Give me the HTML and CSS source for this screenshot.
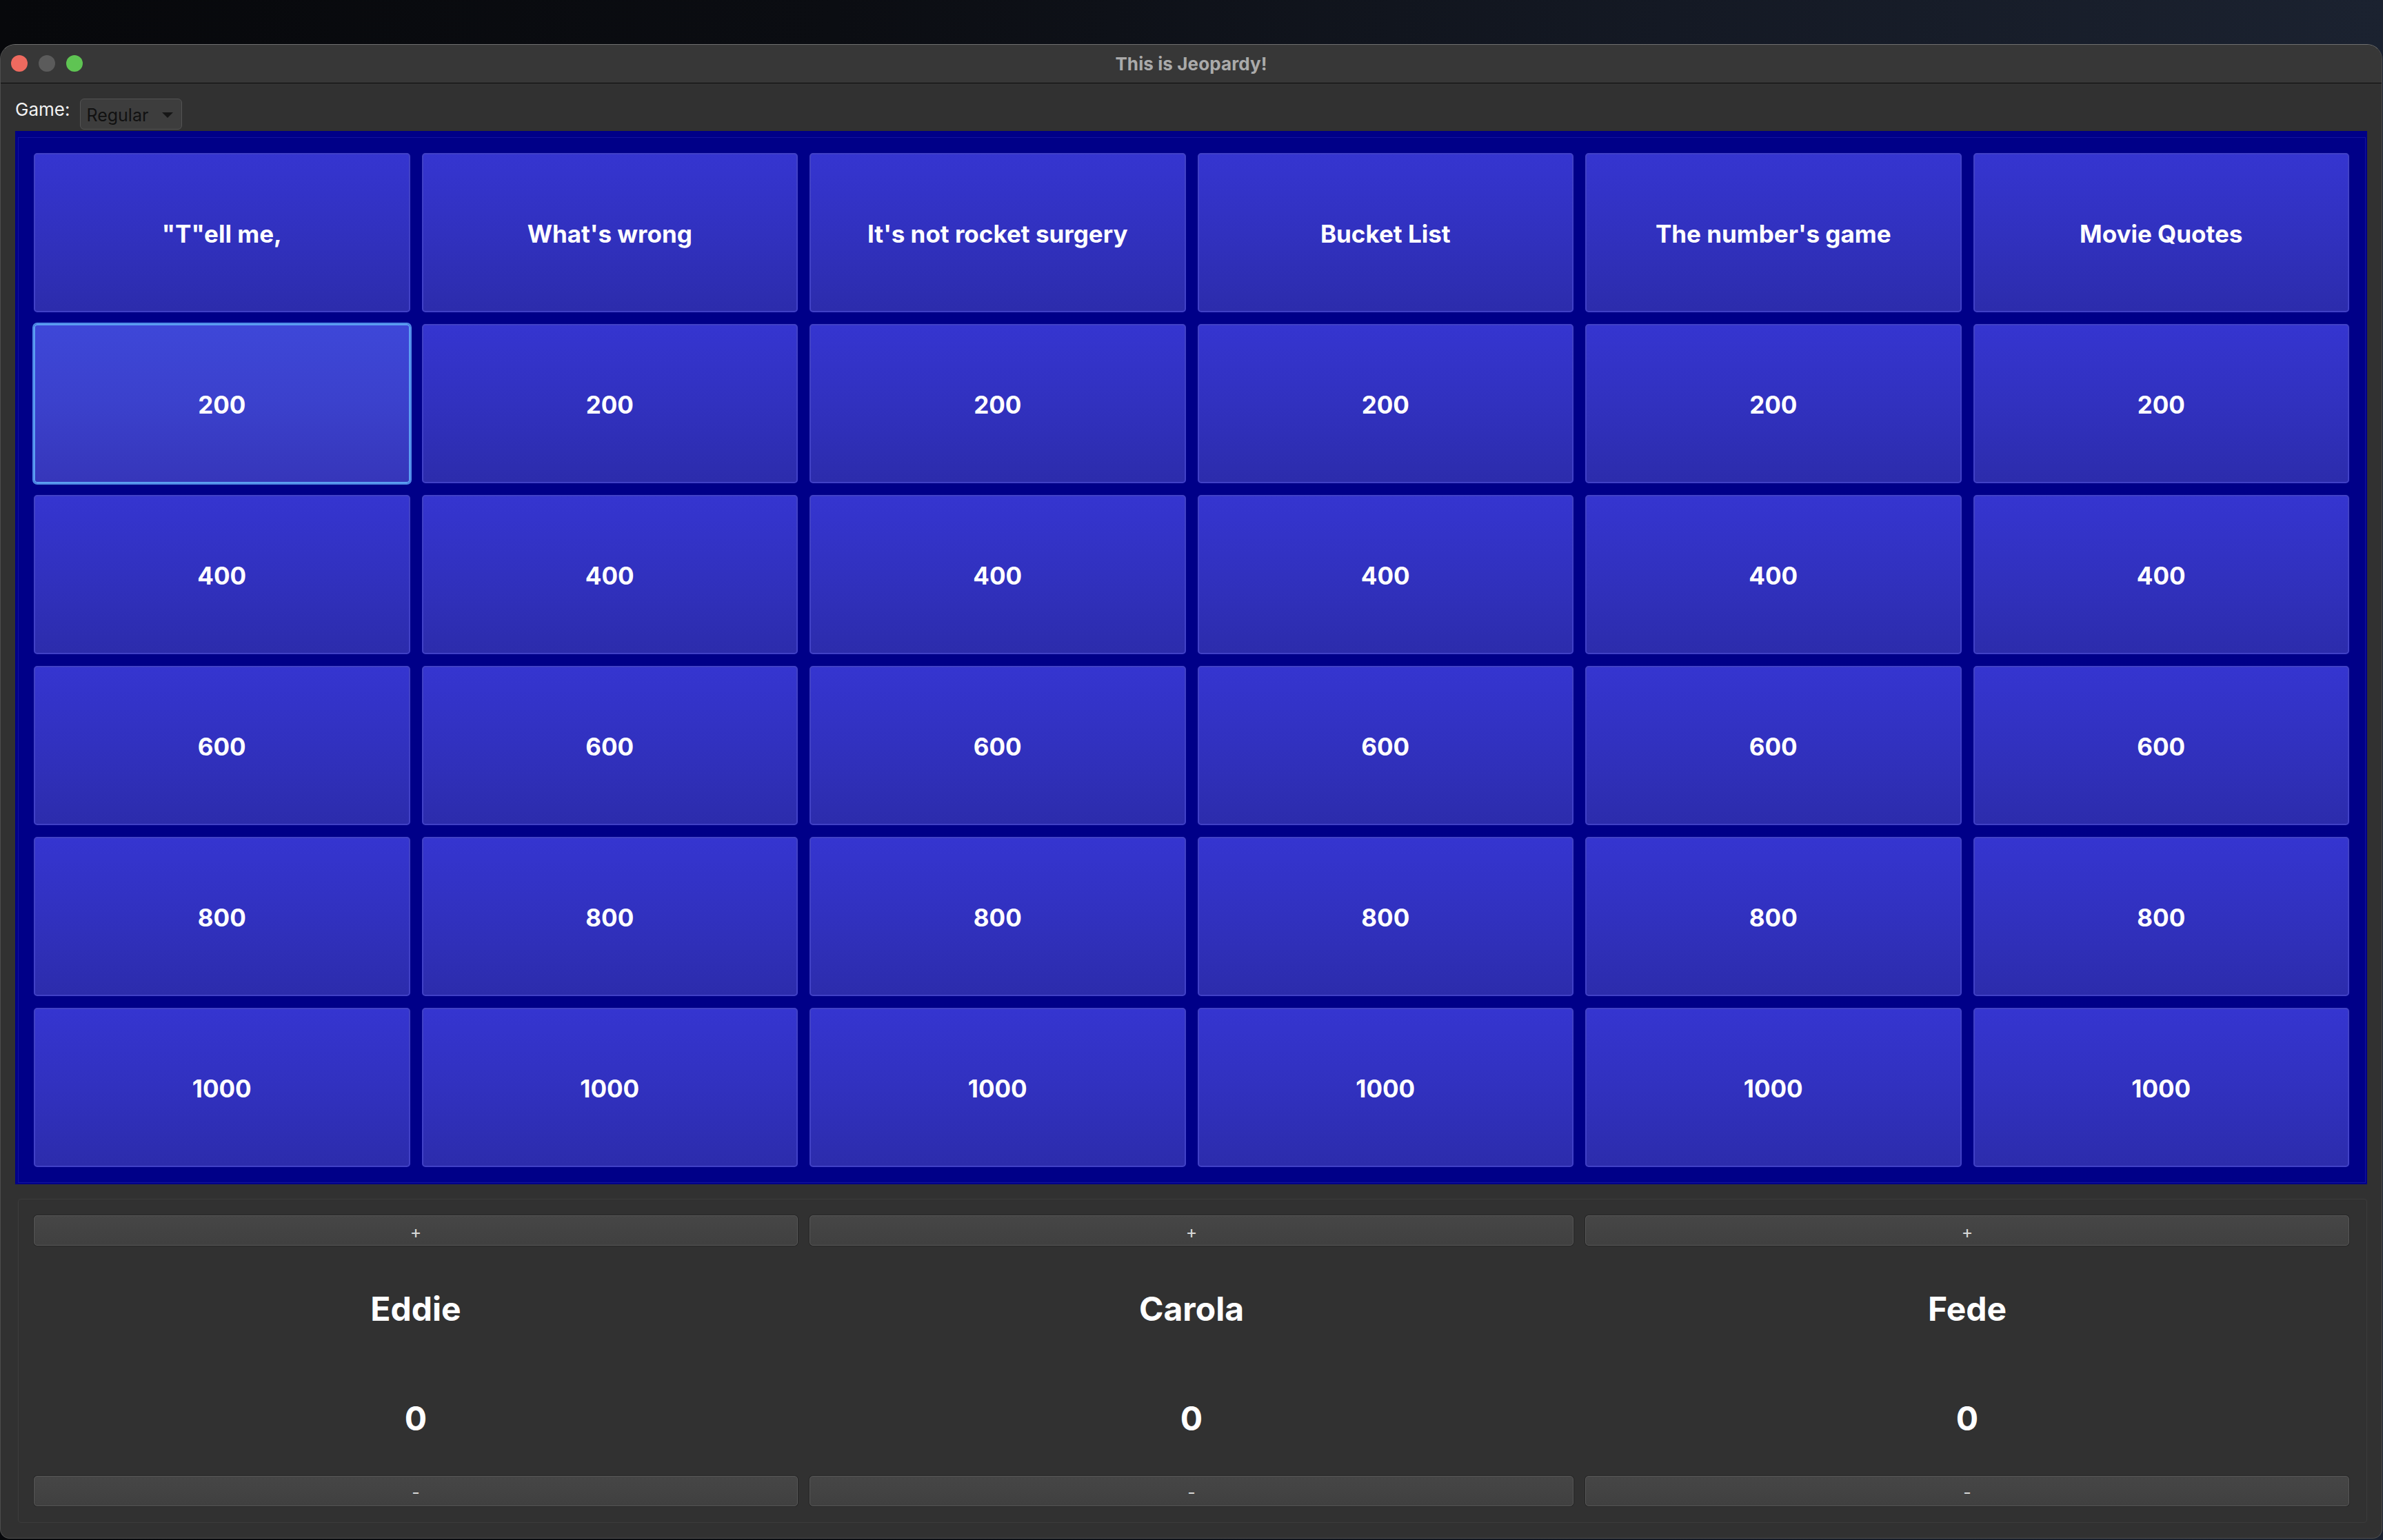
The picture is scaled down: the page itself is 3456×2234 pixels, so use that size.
FILE: index.html
```html
<!DOCTYPE html>
<html>
<head>
<meta charset="utf-8">
<title>This is Jeopardy!</title>
<link rel="stylesheet" href="styles.css">
</head>
<body>
<div class="desktop">
  <div class="window">
    <div class="titlebar">
      <div class="lights">
        <span class="light red"></span>
        <span class="light gray"></span>
        <span class="light green"></span>
      </div>
      <div class="title">This is Jeopardy!</div>
    </div>
    <div class="content">
      <div class="toolbar">
        <span class="label">Game:</span>
        <div class="select">Regular<span class="caret"></span></div>
      </div>
      <div class="board">
        <div class="board-inner">
          <div class="cell">"T"ell me,</div>
          <div class="cell">What's wrong</div>
          <div class="cell">It's not rocket surgery</div>
          <div class="cell">Bucket List</div>
          <div class="cell">The number's game</div>
          <div class="cell">Movie Quotes</div>
          <div class="cell focus">200</div>
          <div class="cell">200</div>
          <div class="cell">200</div>
          <div class="cell">200</div>
          <div class="cell">200</div>
          <div class="cell">200</div>
          <div class="cell">400</div>
          <div class="cell">400</div>
          <div class="cell">400</div>
          <div class="cell">400</div>
          <div class="cell">400</div>
          <div class="cell">400</div>
          <div class="cell">600</div>
          <div class="cell">600</div>
          <div class="cell">600</div>
          <div class="cell">600</div>
          <div class="cell">600</div>
          <div class="cell">600</div>
          <div class="cell">800</div>
          <div class="cell">800</div>
          <div class="cell">800</div>
          <div class="cell">800</div>
          <div class="cell">800</div>
          <div class="cell">800</div>
          <div class="cell">1000</div>
          <div class="cell">1000</div>
          <div class="cell">1000</div>
          <div class="cell">1000</div>
          <div class="cell">1000</div>
          <div class="cell">1000</div>
        </div>
      </div>
      <div class="players">
        <div class="player">
          <div class="btn">+</div>
          <div class="name">Eddie</div>
          <div class="score">0</div>
          <div class="btn minus">-</div>
        </div>
        <div class="player">
          <div class="btn">+</div>
          <div class="name">Carola</div>
          <div class="score">0</div>
          <div class="btn minus">-</div>
        </div>
        <div class="player">
          <div class="btn">+</div>
          <div class="name">Fede</div>
          <div class="score">0</div>
          <div class="btn minus">-</div>
        </div>
      </div>
    </div>
  </div>
</div>
</body>
</html>
```

FILE: styles.css
```css
* { box-sizing: border-box; }

html, body {
  margin: 0;
  padding: 0;
  background: #050608;
}

body {
  font-family: Inter, "Liberation Sans", sans-serif;
  width: 3456px;
  height: 2234px;
  overflow: hidden;
}

.desktop {
  width: 3456px;
  height: 2234px;
  padding-top: 64px;
  background: linear-gradient(90deg, #07080b 0%, #0b0d12 35%, #141924 70%, #1b2230 100%);
}

.window {
  width: 3455px;
  height: 2168px;
  background: #313131;
  border: 1px solid #4d4d4d;
  border-top-color: #707070;
  border-radius: 22px 22px 14px 14px;
  overflow: hidden;
  display: flex;
  flex-direction: column;
}

.titlebar {
  height: 56px;
  flex: none;
  background: #373737;
  border-bottom: 1px solid #0c0c0c;
  position: relative;
  display: flex;
  align-items: center;
  justify-content: center;
}

.lights {
  position: absolute;
  left: 15px;
  top: 15px;
  display: flex;
  gap: 16px;
}

.light {
  width: 24px;
  height: 24px;
  border-radius: 50%;
  display: block;
}
.light.red { background: #ee6a5f; }
.light.gray { background: #5b5b5b; }
.light.green { background: #5fc453; }

.title {
  color: #aaaaaa;
  font-weight: 700;
  font-size: 26px;
  letter-spacing: 0.1px;
}

.content {
  flex: 1;
  display: flex;
  flex-direction: column;
}

.toolbar {
  display: flex;
  align-items: flex-start;
  padding: 22px 0 0 21px;
  gap: 15px;
}

.label {
  color: #f2f2f2;
  font-size: 26px;
  line-height: 30px;
  margin-top: 1px;
}

.select {
  width: 148px;
  height: 45px;
  background: #3d3d3d;
  border: 1px solid #535353;
  border-radius: 6px;
  color: #111111;
  font-size: 25px;
  line-height: 47px;
  padding-left: 8px;
  position: relative;
}

.caret {
  position: absolute;
  right: 12px;
  top: 19px;
  width: 0;
  height: 0;
  border-left: 8px solid transparent;
  border-right: 8px solid transparent;
  border-top: 8px solid #161616;
}

.board {
  margin: 2px 21px 0 21px;
  background: #000088;
  padding: 9px 2px 2px 4px;
}

.board-inner {
  border: 1px solid #13139c;
  padding: 22px 23px 22px 22px;
  display: grid;
  grid-template-columns: repeat(6, 1fr);
  grid-auto-rows: 231px;
  gap: 17px;
}

.cell {
  border: 2px solid #4141c6;
  border-radius: 5px;
  background: linear-gradient(180deg, #3535d0 0%, #3131bf 50%, #2c2cac 100%);
  color: #ffffff;
  font-weight: 700;
  font-size: 35px;
  padding-top: 3px;
  display: flex;
  align-items: center;
  justify-content: center;
  text-align: center;
}

.cell.focus {
  border-color: #5c9ff2;
  box-shadow: 0 0 0 2px #4f8ae6;
  background: linear-gradient(180deg, #3e47d8 0%, #3b41cc 50%, #3636ba 100%);
}

.players {
  margin: 21px 21px 0 25px;
  height: 470px;
  border: 1px solid #3c3c3c;
  border-radius: 4px;
  padding: 23px 25px 23px 22px;
  display: grid;
  grid-template-columns: repeat(3, 1fr);
  gap: 17px;
}

.player {
  display: flex;
  flex-direction: column;
}

.btn {
  height: 44px;
  flex: none;
  background: linear-gradient(180deg, #464646 0%, #404040 100%);
  border: 1px solid #575757;
  border-radius: 5px;
  box-shadow: 0 0 0 1px #262626;
  color: #d8d8d8;
  font-size: 25px;
  padding-top: 3px;
  display: flex;
  align-items: center;
  justify-content: center;
}

.btn.minus {
  padding-top: 4px;
}

.name, .score {
  flex: 1;
  display: flex;
  align-items: center;
  justify-content: center;
  color: #ffffff;
  font-weight: 700;
  font-size: 48px;
}

.name {
  padding-top: 12px;
}

.score {
  padding-bottom: 4px;
}
```
